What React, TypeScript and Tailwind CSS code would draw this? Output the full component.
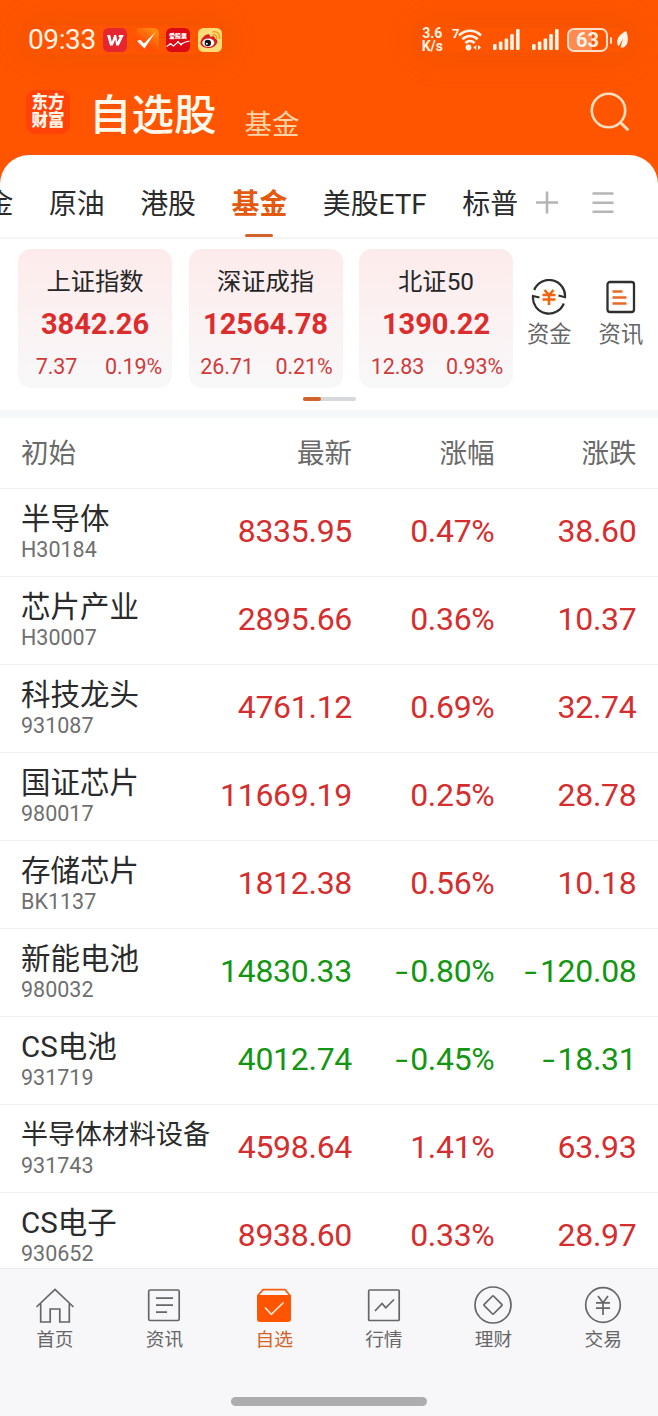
import type { ReactNode } from "react";

type IndexInfo = {
    name: string;
    price: string;
    change: string;
    percent: string;
}

type FundInfo = {
    name: string;
    code: string;
    price: string;
    percent: string;
    change: string;
}

const tabs = ["金", "原油", "港股", "基金", "美股ETF", "标普"];

const indexes: IndexInfo[] = [
    { name: "上证指数", price: "3842.26", change: "7.37", percent: "0.19%" },
    { name: "深证成指", price: "12564.78", change: "26.71", percent: "0.21%" },
    { name: "北证50", price: "1390.22", change: "12.83", percent: "0.93%" },
];

const funds: FundInfo[] = [
    { name: "半导体", code: "H30184", price: "8335.95", percent: "0.47%", change: "38.60" },
    { name: "芯片产业", code: "H30007", price: "2895.66", percent: "0.36%", change: "10.37" },
    { name: "科技龙头", code: "931087", price: "4761.12", percent: "0.69%", change: "32.74" },
    { name: "国证芯片", code: "980017", price: "11669.19", percent: "0.25%", change: "28.78" },
    { name: "存储芯片", code: "BK1137", price: "1812.38", percent: "0.56%", change: "10.18" },
    { name: "新能电池", code: "980032", price: "14830.33", percent: "-0.80%", change: "-120.08" },
    { name: "CS电池", code: "931719", price: "4012.74", percent: "-0.45%", change: "-18.31" },
    { name: "半导体材料设备", code: "931743", price: "4598.64", percent: "1.41%", change: "63.93" },
    { name: "CS电子", code: "930652", price: "8938.60", percent: "0.33%", change: "28.97" },
];

function Signal() {
    return (
        <svg width="27" height="22" viewBox="0 0 27 22" fill="#fff3e6">
            <rect x="0" y="15" width="3.6" height="6" rx="1.2" />
            <rect x="5.8" y="12.5" width="3.6" height="8.5" rx="1.2" />
            <rect x="11.6" y="9.5" width="3.6" height="11.5" rx="1.2" />
            <rect x="17.2" y="5" width="3.6" height="16" rx="1.2" />
            <rect x="23" y="0" width="3.6" height="21" rx="1.2" />
        </svg>
    )
}

function StatusBar() {
    return (
        <div className="flex h-20 items-center pl-7 pr-[29px] text-[#fff3e6]">
            {/* CLOCK & APP NOTIFICATIONS */}
            <div className="flex items-center rounded-full shadow-[0_0_28px_8px_rgba(190,80,10,0.18)]">
                <span className="w-[75px] text-[28px] leading-none tracking-[-0.4px]">09:33</span>
                <div className="flex gap-[7.5px]">
                    <svg width="24" height="24" viewBox="0 0 24 24">
                        <rect width="24" height="24" rx="5.5" fill="#e5262f" />
                        <path d="M4 7h3.200l1.600 7L11.300 7h1.900l1.200 7 2.300-5H15.400L16 7h4.800l-5 10.500h-2.600l-1-6-2.500 6H7z" fill="#fff" />
                    </svg>
                    <svg width="24" height="24" viewBox="0 0 24 24">
                        <defs>
                            <linearGradient id="tick" x1="1" y1="0" x2="0.3" y2="1">
                                <stop offset="0" stopColor="#ff9a12" />
                                <stop offset="0.7" stopColor="#ff5106" />
                            </linearGradient>
                        </defs>
                        <rect width="24" height="24" rx="5.5" fill="url(#tick)" />
                        <path d="M2 13l3.5-1.2 3.4 3.8L20.5 4 9.5 20.5z" fill="#fff" />
                    </svg>
                    <svg width="24" height="24" viewBox="0 0 24 24">
                        <rect width="24" height="24" rx="5.5" fill="#dc0a14" />
                        <text x="12" y="9.6" textAnchor="middle" fontSize="6" fontWeight="900" fill="#fff">爱股票</text>
                        <path d="M0.5 18.5l4-2.5 3 2 4.5-4 3 2.5 3-2 5.5-1.5" fill="none" stroke="#fff" strokeWidth="1.2" />
                        <g fill="#fff">
                            <circle cx="4.5" cy="16" r="1.1" />
                            <circle cx="12" cy="14" r="1.1" />
                            <circle cx="15" cy="16.5" r="1.1" />
                        </g>
                    </svg>
                    <svg width="24" height="24" viewBox="0 0 24 24">
                        <rect width="24" height="24" rx="5.5" fill="#ffdc78" />
                        <path d="M2.5 14.5C3 10.5 8 5.500 11 6.500c1.400.5 1 1.800.8 2.400 2-.9 5.500-1.200 5 1.500 1.600.5 3 1.600 2.400 4C18 18 14 20.300 9.800 20 5.500 19.700 2.200 17.700 2.500 14.500z" fill="#d81e20" />
                        <ellipse cx="10.300" cy="14.800" rx="6" ry="4.200" fill="#fff" />
                        <circle cx="9.800" cy="15" r="3.200" fill="#111" />
                        <circle cx="8.800" cy="15.800" r="1" fill="#fff" />
                        <path d="M15.200 6.800c2.300-.5 4 1.200 3.500 3.500M15 3.800c4.200-.8 7.400 2.300 6.500 6.700" fill="none" stroke="#f59a1b" strokeWidth="1.500" strokeLinecap="round" />
                    </svg>
                </div>
            </div>

            {/* NETWORK & BATTERY */}
            <div className="ml-auto flex items-center rounded-full shadow-[0_0_28px_8px_rgba(190,80,10,0.18)]">
                <div className="flex h-[26px] flex-col justify-between text-center text-[14px] font-bold leading-[13px]">
                    <div>3.6</div>
                    <div>K/s</div>
                </div>
                <svg className="ml-[9px]" width="31" height="26" viewBox="0 0 31 26">
                    <text x="0" y="11" fontSize="13" fontWeight="700" fill="#fff3e6">7</text>
                    <g fill="none" stroke="#fff3e6" strokeWidth="2.600">
                        <path d="M7 8.500c6.500-6.300 15.500-6.300 22 0" />
                        <path d="M10.300 12.300c4.600-4.500 10.800-4.500 15.400 0" />
                        <path d="M13.400 16c2.800-2.700 6.400-2.700 9.200 0" />
                    </g>
                    <circle cx="16.500" cy="20.500" r="2.900" fill="#fff3e6" />
                    <path d="M24.300 18v5L21.300 20.500zM26 18v5l3-2.500z" fill="#fff3e6" />
                </svg>
                <div className="ml-2.5 flex gap-3">
                    <Signal />
                    <Signal />
                </div>
                <div className="ml-[8px] flex h-6 w-[41px] items-center justify-center rounded-[7px] border-2 border-[#ffdfc9] bg-[linear-gradient(90deg,#ff8a52_63%,transparent_63%)] text-[20px] font-bold leading-none">
                    63
                </div>
                <div className="ml-[2px] h-[7px] w-[2px] rounded-full bg-[#ffdfc9]" />
                <svg className="ml-1" width="13" height="20" viewBox="0 0 13 20" fill="#fff3e6">
                    <path d="M10 1C5 3.500 1 7.500 1.200 12.500c0 1.700.6 2.800 1.600 3.800L7 8.500 4.500 17.500c5 .8 7.300-3.500 7.300-8C11.800 6 11.200 3 10 1z" />
                </svg>
            </div>
        </div>
    )
}

function Header() {
    return (
        <div className="flex h-[75px] items-start pl-[26px] pr-7">
            <div className="mt-2.5 flex size-11 flex-col items-center justify-center rounded-[9px] bg-[#ff4208] text-[16.500px] font-black leading-[18px] text-[#fff3e6]">
                <span>东方</span>
                <span>财富</span>
            </div>
            <h1 className="ml-[19px] mt-[15px] text-[42.500px] font-medium leading-[42px] text-[#fff8ec]">自选股</h1>
            <span className="ml-[28px] mt-[31px] text-[27.500px] leading-[28px] text-[#ffd3a8]">基金</span>
            <svg className="ml-auto mt-[11px]" width="40" height="42" viewBox="0 0 40 42" fill="none" stroke="#ffdfc0" strokeWidth="2.600">
                <circle cx="18.500" cy="19.500" r="16.700" />
                <path d="M30.500 31.500l7.800 7.800" strokeWidth="3" />
            </svg>
        </div>
    )
}

function Tabs() {
    return (
        <div className="flex h-[84px] items-stretch border-b-2 border-[#f4f4f5]">
            <div className="-ml-[14.500px] flex gap-[35.500px] text-[27.900px] text-[#2b2b2b]">
                {tabs.map((tab) => (
                    <div
                        key={tab}
                        className={`relative whitespace-nowrap pt-[33.500px] leading-[32px] ${tab === "基金" ? "font-bold text-[#e2590f]" : ""}`}>
                        {tab}
                        {tab === "基金" && (
                            <div className="absolute bottom-0 left-1/2 h-[3px] w-7 -translate-x-1/2 rounded-full bg-[#d0622a]" />
                        )}
                    </div>
                ))}
            </div>
            <svg className="ml-[17px] mt-9" width="24" height="24" viewBox="0 0 24 24" stroke="#b5b5b5" strokeWidth="2.600">
                <path d="M1 11.500h22M12 0.500v22" />
            </svg>
            <svg className="ml-[33px] mt-9" width="22" height="24" viewBox="0 0 22 24" stroke="#b5b5b5" strokeWidth="2.400">
                <path d="M0.500 2.500h21M0.500 11.700h21M0.500 20.800h21" />
            </svg>
        </div>
    )
}

function IndexCard({ name, price, change, percent }: IndexInfo) {
    return (
        <div className="flex h-[139px] w-[154px] flex-col rounded-[13px] bg-linear-to-b from-[#fdebeb] to-[#f8f8f9] text-center">
            <div className="mt-[19px] text-[24.300px] leading-[28px] text-[#262626]">{name}</div>
            <div className="mt-[14px] text-[29px] font-bold leading-[28px] text-[#db2d2d]">{price}</div>
            <div className="mt-[14px] grid grid-cols-2 text-[21.500px] leading-[30px] tracking-[-0.1px] text-[#cf3b3b]">
                <span>{change}</span>
                <span>{percent}</span>
            </div>
        </div>
    )
}

function Indexes() {
    return (
        <div className="h-[171px] pt-2.5">
            <div className="flex pl-[18px]">
                <div className="flex gap-[16.500px]">
                    {indexes.map((item) => (
                        <IndexCard key={item.name} {...item} />
                    ))}
                </div>
                <div className="ml-3.5 mt-[30px] flex gap-[27px] text-[22.300px] leading-[26px] text-[#666]">
                    <div className="flex flex-col items-center">
                        <svg width="36" height="36" viewBox="0 0 36 36" fill="none" stroke="#2f2f2f" strokeWidth="2.200">
                            <path d="M3.200 11A16 16 0 0 1 34 18.200L27.500 16.500M32.800 24.500A16 16 0 0 1 2 17L8.500 18.500" />
                            <path d="M13.500 11l4.500 5 4.500-5M11.500 16h13M11.500 20.500h13M18 15.500V26" stroke="#f2640f" strokeWidth="2.600" />
                        </svg>
                        <span className="mt-1.5">资金</span>
                    </div>
                    <div className="flex flex-col items-center">
                        <svg width="36" height="36" viewBox="0 0 36 36" fill="none" stroke="#2f2f2f" strokeWidth="2.300">
                            <rect x="4.500" y="3" width="26.500" height="30" rx="2.500" />
                            <path d="M9.500 12.500h10M9.500 18.500h14M9.500 24.500h14" stroke="#e8692a" strokeWidth="2.600" />
                        </svg>
                        <span className="mt-1.5">资讯</span>
                    </div>
                </div>
            </div>
            <div className="mx-auto mt-[9px] h-[4px] w-[53px] rounded-full bg-[#d7d8dc]">
                <div className="h-full w-[18px] rounded-full bg-[#d0622a]" />
            </div>
        </div>
    )
}

// Leading minus is drawn wider than the font's own hyphen
function Value({ text, down }: { text: string; down: boolean }) {
    const negative = text.startsWith("-");
    return (
        <span className={down ? "text-[#149614]" : "text-[#d42e2e]"}>
            {negative && <span className="mr-[3px] inline-block origin-right scale-x-140">-</span>}
            {negative ? text.slice(1) : text}
        </span>
    )
}

function FundTable() {
    return (
        <div className="h-[858px] overflow-hidden border-t-8 border-[#f6f7f9]">
            <div className="grid h-[71px] grid-cols-[210px_142px_142.500px_142px] border-b border-[#f0f0f0] pt-[19px] text-right text-[27.500px] leading-[33px] text-[#6a6a6a]">
                <span className="pl-[21px] text-left">初始</span>
                <span>最新</span>
                <span>涨幅</span>
                <span>涨跌</span>
            </div>
            {funds.map((fund) => {
                const down = fund.change.startsWith("-");
                return (
                    <div
                        key={fund.code}
                        className="grid h-[88px] grid-cols-[210px_142px_142.500px_142px] border-b border-[#f0f0f0] text-right text-[32px] leading-[85px] tracking-[-0.3px]">
                        <div className="pl-[21px] pt-[13px] text-left tracking-normal">
                            <div className={`whitespace-nowrap leading-[34px] text-[#2b2b2b] ${fund.name.length > 6 ? "text-[27px]" : "text-[29.500px]"}`}>
                                {fund.name}
                            </div>
                            <div className="mt-px text-[21.500px] leading-[26px] text-[#6f6f6f]">{fund.code}</div>
                        </div>
                        <Value text={fund.price} down={down} />
                        <Value text={fund.percent} down={down} />
                        <Value text={fund.change} down={down} />
                    </div>
                )
            })}
        </div>
    )
}

function NavItem({ label, active = false, children }: { label: string; active?: boolean; children: ReactNode }) {
    return (
        <div className={`flex flex-col items-center ${active ? "text-[#d8621f]" : "text-[#666]"}`}>
            <svg width="40" height="40" viewBox="0 0 40 40" fill="none" stroke="currentColor" strokeWidth="1.700">
                {children}
            </svg>
            <span className="mt-[5px] text-[18.700px] leading-[22px]">{label}</span>
        </div>
    )
}

function BottomNav() {
    return (
        <div className="h-[148px] border-t border-[#ececee] bg-[#f7f7fa] pt-[15px]">
            <div className="grid h-[113px] grid-cols-6">
                <NavItem label="首页">
                    <path d="M1.500 23L20 5.500 38.500 23M5.700 19.500V38h9.500V25h9.600v13h9.500V19.500" />
                </NavItem>
                <NavItem label="资讯">
                    <rect x="4.700" y="6" width="30.500" height="30.500" rx="1.500" />
                    <path d="M12 14.200h17M12 21.200h17M12 28.200h11" />
                </NavItem>
                <NavItem label="自选" active>
                    <path d="M3.500 12L9 5.700h22l5.500 6.300" stroke="#f2600f" />
                    <path d="M3 11h34v24a3 3 0 0 1-3 3H6a3 3 0 0 1-3-3z" fill="#ff5500" stroke="none" />
                    <path d="M11 23.500l6.300 6.800L29.500 18.500" stroke="#ffe9d6" />
                </NavItem>
                <NavItem label="行情">
                    <rect x="4.700" y="6" width="30.500" height="30.500" rx="1" />
                    <path d="M11 27l7-7.500 3.800 4.300L30 15.500" />
                </NavItem>
                <NavItem label="理财">
                    <circle cx="20" cy="21" r="18" />
                    <rect x="13.300" y="14.300" width="13.400" height="13.400" rx="1" transform="rotate(45 20 21)" />
                </NavItem>
                <NavItem label="交易">
                    <circle cx="20" cy="21" r="17.300" />
                    <path d="M15 12l5 6.800 5-6.800M13 18.900h14M13 24.200h14M20 18.500V31" />
                </NavItem>
            </div>
            <div className="mx-auto h-[9px] w-[196px] rounded-full bg-[#adadaf]" />
        </div>
    )
}

export default function App() {
    return (
        <div className="h-[1416px] w-[658px] overflow-hidden bg-[#ff5500] font-[Roboto,'Noto_Sans_CJK_SC',sans-serif]">
            <StatusBar />
            <Header />
            <div className="overflow-hidden rounded-t-[29px] bg-white">
                <Tabs />
                <Indexes />
                <FundTable />
            </div>
            <BottomNav />
        </div>
    )
}
